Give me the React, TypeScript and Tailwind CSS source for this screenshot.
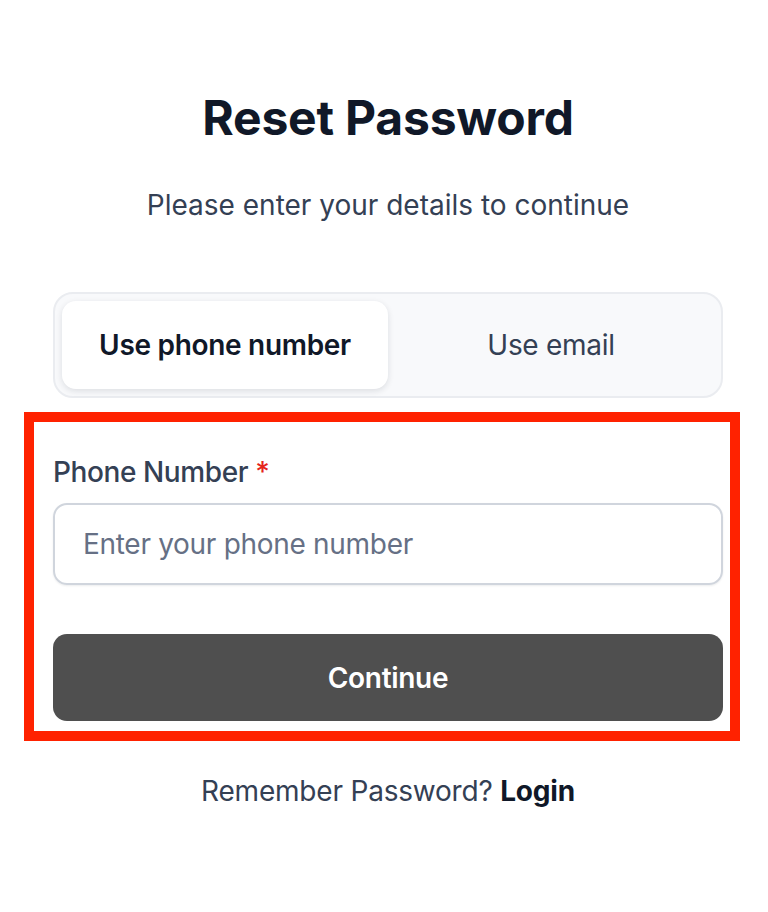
import React from "react";

export default function App() {
  return (
    <div
      className="w-[768px] h-[912px] bg-white pl-[53px] pr-[45px] flex flex-col"
      style={{ fontFamily: "Inter, 'Noto Sans', sans-serif" }}
    >
      <h1 className="mt-[88px] text-center text-[48px] leading-[60px] font-bold text-[#101828] tracking-[-0.2px]">
        Reset Password
      </h1>
      <p className="mt-[40px] text-center text-[28px] leading-[34px] text-[#344054]">
        Please enter your details to continue
      </p>

      <div className="mt-[70px] h-[106px] rounded-[20px] border-2 border-[#eaecf0] bg-[#f8f9fb] p-[7px] flex">
        <div className="w-[326px] rounded-[14px] bg-white shadow-[0_2px_6px_rgba(16,24,40,0.12)] flex items-center justify-center text-[28px] font-semibold text-[#101828] tracking-[-0.3px]">
          Use phone number
        </div>
        <div className="flex-1 flex items-center justify-center text-[28px] text-[#344054] tracking-[-0.3px]">
          Use email
        </div>
      </div>

      <div className="mt-[14px] -ml-[29px] -mr-[17px] border-[10px] border-[#ff2200] pl-[19px] pr-[7px] pt-[33px] pb-[10px]">
        <label className="block text-[28px] leading-[34px] font-medium text-[#344054] tracking-[-0.4px]">
          Phone Number <span className="text-[#e5251b]">*</span>
        </label>
        <div className="mt-[14px] h-[82px] rounded-[14px] border-2 border-[#d0d5dd] shadow-[0_1px_2px_rgba(16,24,40,0.08)] flex items-center px-[28px]">
          <span className="text-[28px] text-[#667085] tracking-[-0.3px]">Enter your phone number</span>
        </div>
        <button className="mt-[49px] w-full h-[87px] rounded-[14px] bg-[#4f4f4f] text-white text-[28px] font-semibold tracking-[-0.3px]">
          Continue
        </button>
      </div>

      <p className="mt-[33px] text-center text-[28px] leading-[34px] text-[#344054] tracking-[-0.2px]">
        Remember Password? <span className="font-bold text-[#101828]">Login</span>
      </p>
    </div>
  );
}
